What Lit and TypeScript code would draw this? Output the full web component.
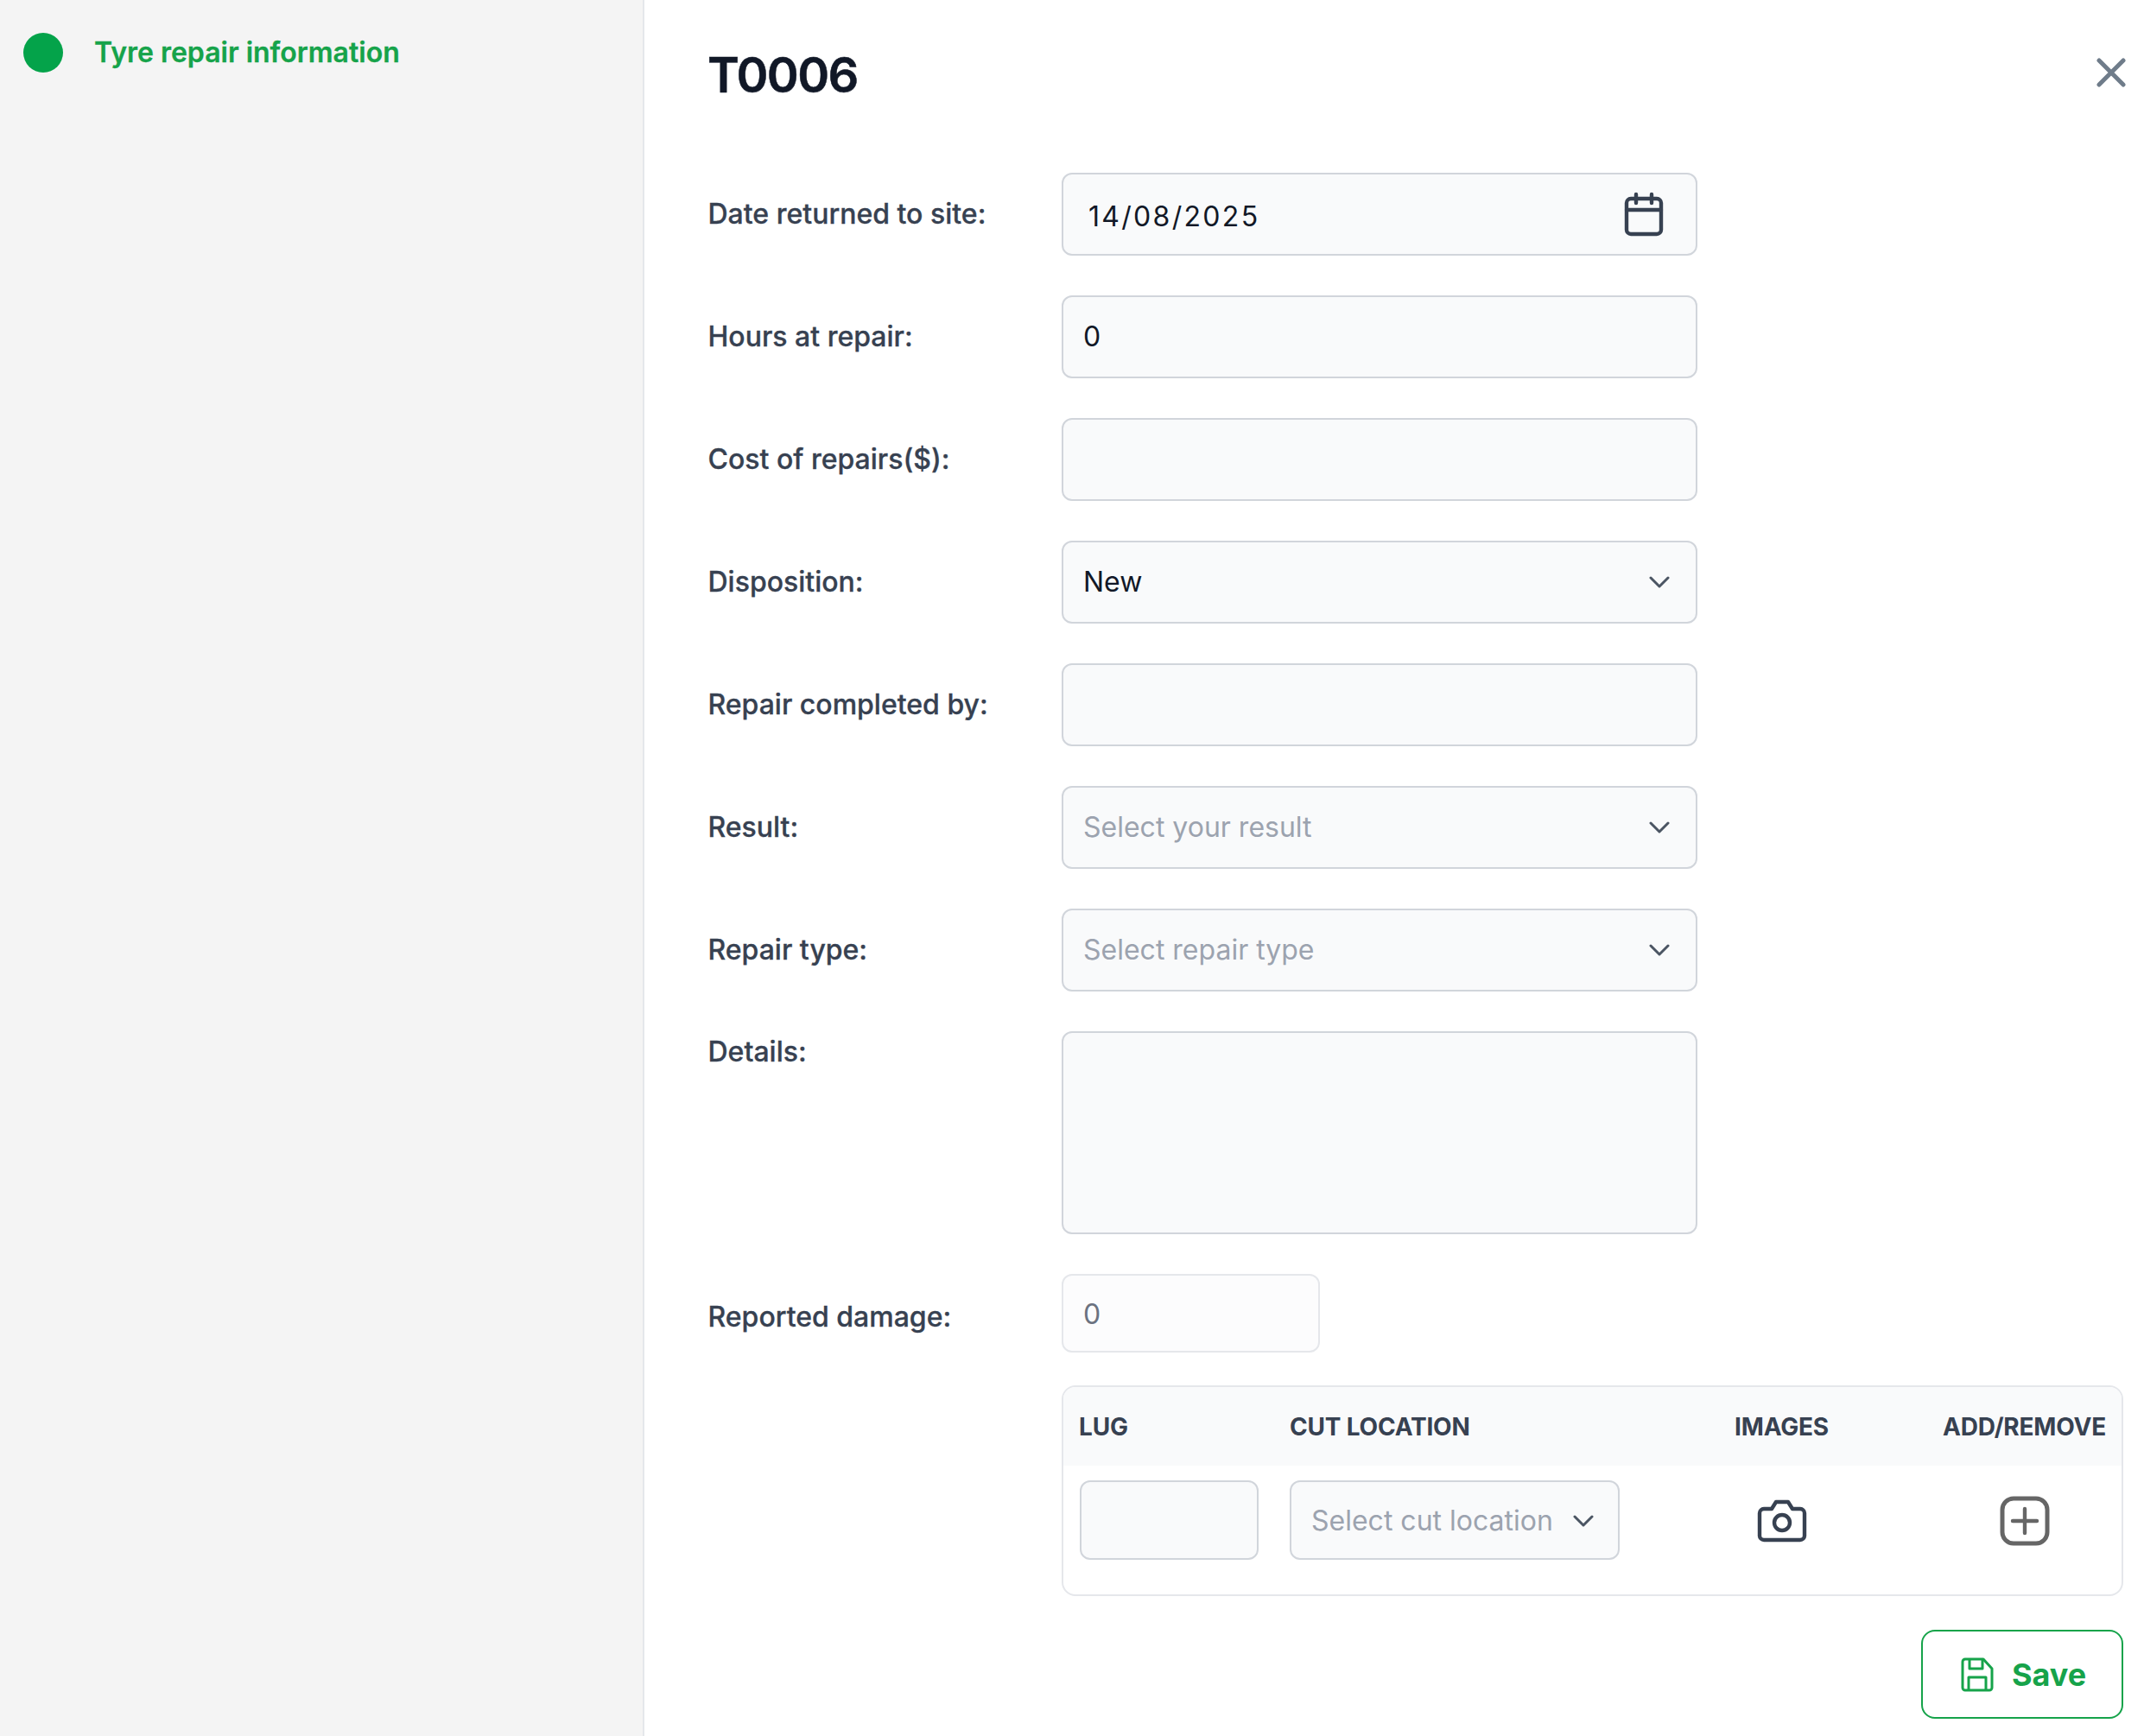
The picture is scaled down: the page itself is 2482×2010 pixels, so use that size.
import { LitElement, html, css } from "lit";
import { customElement } from "lit/decorators.js";

const chevron = html`<svg class="chev" viewBox="0 0 24 24" fill="none" stroke="#4b5563" stroke-width="3" stroke-linecap="round" stroke-linejoin="round"><path d="M2 7l10 10L22 7"/></svg>`;

@customElement("app-root")
export class AppRoot extends LitElement {
  static styles = css`
    :host { display: block; width: 2482px; height: 2010px; overflow: hidden; font-family: Inter, "Liberation Sans", sans-serif; background: #fff; }
    * { box-sizing: border-box; }
    .page { display: flex; height: 2010px; }
    .side { width: 746px; flex: none; background: #f4f4f4; border-right: 2px solid #e5e7eb; padding: 38px 27px; display: flex; align-items: flex-start; gap: 36px; }
    .dot { width: 46px; height: 46px; border-radius: 50%; background: #04a34a; flex: none; }
    .step { font-size: 32px; line-height: 46px; font-weight: 600; color: #16a34a; white-space: nowrap; -webkit-text-stroke: 0.3px #16a34a; }
    .main { flex: 1; padding: 0 24px 0 73px; display: flex; flex-direction: column; }
    .head { display: flex; justify-content: space-between; align-items: flex-start; height: 200px; padding-top: 53px; }
    h1 { margin: 0; font-size: 56px; line-height: 68px; font-weight: 600; color: #111827; letter-spacing: -1.6px; -webkit-text-stroke: 0.5px #111827; }
    .close { width: 34px; height: 34px; margin-top: 14px; margin-right: -3px; display: block; }
    .row { display: flex; align-items: center; margin-bottom: 46px; }
    .row.top { align-items: flex-start; }
    .label { width: 410px; flex: none; padding-left: 0.5px; font-size: 32px; font-weight: 500; color: #374151; line-height: 48px; -webkit-text-stroke: 0.3px #374151; }
    .field { width: 736px; height: 96px; background: #f9fafb; border: 2px solid #d1d5db; border-radius: 12px; display: flex; align-items: center; justify-content: space-between; padding: 0 23px 1px; font-size: 32px; color: #111827; }
    .field.ph { color: #9ca3af; }
    .field.area { height: 235px; }
    .date { padding: 5px 0 0 6px; letter-spacing: 2.3px; }
    .chev { width: 24px; height: 24px; margin-right: 7px; flex: none; }
    .cal { width: 48px; height: 52px; margin-right: 13px; flex: none; }
    .small { width: 299px; height: 91px; background: #fcfcfd; border: 2px solid #e5e7eb; color: #6b7280; border-radius: 12px; display: flex; align-items: center; padding: 2px 23px 0; font-size: 32px; }
    .row.dmg { margin-bottom: 38px; }
    .row.dmg .label { padding-top: 8px; }
    .table { margin-left: 410px; width: 1229px; height: 244px; border: 2px solid #e5e7eb; border-radius: 16px; overflow: hidden; }
    .tr { display: grid; grid-template-columns: 207px 382px 303px 187px; column-gap: 36px; padding: 0 19px; }
    .thead { height: 91px; background: #f9fafb; align-items: center; font-size: 28px; font-weight: 700; color: #374151; white-space: nowrap; letter-spacing: -0.2px; }
    .lug { margin-left: -1px; }
    .tbody { padding-top: 17px; align-items: center; }
    .ctr { display: flex; justify-content: center; }
    .cell { height: 92px; width: 100%; background: #f9fafb; border: 2px solid #d1d5db; border-radius: 12px; display: flex; align-items: center; justify-content: space-between; padding: 1px 23px 0; font-size: 32px; color: #9ca3af; white-space: nowrap; }
    .cell .chev { margin-right: 5px; }
    .icon-row { padding-top: 1px; }
    .foot { display: flex; justify-content: flex-end; margin-top: 39px; }
    .save { width: 234px; height: 103px; border: 2px solid #16a34a; border-radius: 16px; background: #fff; display: flex; align-items: center; justify-content: center; gap: 21px; font-family: inherit; font-size: 36px; font-weight: 700; color: #16a34a; padding: 0 0 0 3px; }
  `;

  private field(label: string, value: string, opts: { ph?: boolean; sel?: boolean } = {}) {
    return html`<div class="row"><div class="label">${label}</div>
      <div class="field ${opts.ph ? "ph" : ""}"><span>${value}</span>${opts.sel ? chevron : ""}</div></div>`;
  }

  render() {
    return html`<div class="page">
      <aside class="side"><div class="dot"></div><div class="step">Tyre repair information</div></aside>
      <main class="main">
        <div class="head"><h1>T0006</h1>
          <svg class="close" viewBox="0 0 34 34" fill="none" stroke="#6f7c8a" stroke-width="5" stroke-linecap="round"><path d="M3 3l28 28M31 3L3 31"/></svg>
        </div>
        <div class="row"><div class="label">Date returned to site:</div>
          <div class="field"><span class="date">14/08/2025</span>
            <svg class="cal" viewBox="0 0 48 52" fill="none" stroke="#374151" stroke-width="4.4" stroke-linecap="round" stroke-linejoin="round">
              <rect x="4" y="8" width="40" height="41" rx="5"/><path d="M4 21h40M15 3v10M33 3v10"/>
            </svg></div></div>
        ${this.field("Hours at repair:", "0")}
        ${this.field("Cost of repairs($):", "")}
        ${this.field("Disposition:", "New", { sel: true })}
        ${this.field("Repair completed by:", "")}
        ${this.field("Result:", "Select your result", { ph: true, sel: true })}
        ${this.field("Repair type:", "Select repair type", { ph: true, sel: true })}
        <div class="row top"><div class="label">Details:</div><div class="field area"></div></div>
        <div class="row dmg"><div class="label">Reported damage:</div><div class="small">0</div></div>
        <div class="table">
          <div class="tr thead"><div class="lug">LUG</div><div>CUT LOCATION</div><div class="ctr">IMAGES</div><div class="ctr">ADD/REMOVE</div></div>
          <div class="tr tbody">
            <div class="cell"></div>
            <div class="cell"><span>Select cut location</span>${chevron}</div>
            <div class="ctr icon-row"><svg width="58" height="50" viewBox="0 0 58 50" fill="none" stroke="#374151" stroke-width="4.4" stroke-linejoin="round">
              <path d="M8 11h9l5-8h14l5 8h9a5 5 0 0 1 5 5v26a5 5 0 0 1-5 5H8a5 5 0 0 1-5-5V16a5 5 0 0 1 5-5z"/><circle cx="29" cy="27" r="9"/></svg></div>
            <div class="ctr icon-row"><svg width="58" height="58" viewBox="0 0 58 58" fill="none" stroke="#666" stroke-linecap="round">
              <rect x="3" y="3" width="52" height="52" rx="13" stroke-width="5"/><path d="M29 15v28M15 29h28" stroke-width="4.4"/></svg></div>
          </div>
        </div>
        <div class="foot"><button class="save">
          <svg width="38" height="40" viewBox="0 0 38 40" fill="none" stroke="#16a34a" stroke-width="3" stroke-linejoin="round">
            <path d="M2 5a3 3 0 0 1 3-3h21l10 11v22a3 3 0 0 1-3 3H5a3 3 0 0 1-3-3z"/><path d="M10 2v11h15V2M9 38V23h20v15"/></svg>
          Save</button></div>
      </main>
    </div>`;
  }
}
